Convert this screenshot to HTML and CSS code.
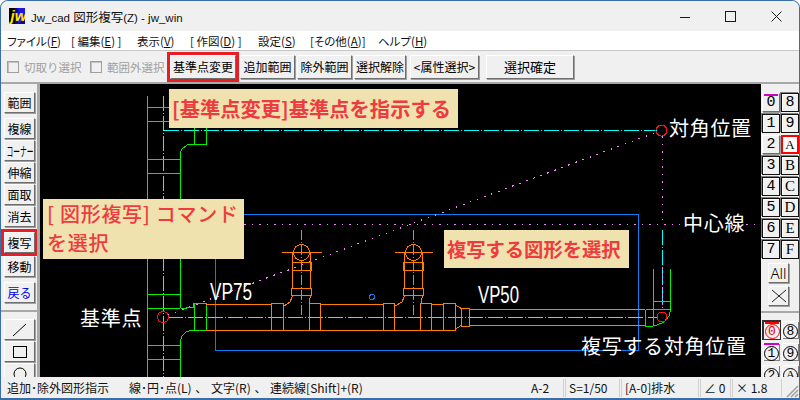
FILE: index.html
```html
<!DOCTYPE html>
<html lang="ja">
<head>
<meta charset="utf-8">
<title>Jw_cad 図形複写</title>
<link rel="stylesheet" href="styles.css">
</head>
<body>
<div class="window">
  <header class="titlebar">
    <svg class="appicon" width="16" height="16" viewBox="0 0 16 16" shape-rendering="crispEdges"><rect width="16" height="16" fill="#0c0c80"/><path d="M0 0H6V16H0Z" fill="#000"/><path d="M9 0H16V9L9 16Z" fill="#1818e0"/><text x="1.5" y="12.5" class="appicon-text">jw</text></svg>
    <span class="title">Jw_cad <span class="title-cjk">図形複写</span>(Z) - jw_win</span>
    <div class="controls">
      <svg width="120" height="31" viewBox="0 0 120 31"><g fill="none" stroke="#1a1a1a" stroke-width="1" shape-rendering="crispEdges"><path d="M0 16.5H10"/><rect x="45.5" y="10.5" width="10" height="10" rx="1"/></g><path d="M91.5 10.5L101.5 20.5M101.5 10.5L91.5 20.5" stroke="#1a1a1a" fill="none"/></svg>
    </div>
  </header>
  <nav class="menubar">
    <span class="m m1">ファイル(<u>F</u>)</span>
    <span class="m m2">[ 編集(<u>E</u>) ]</span>
    <span class="m m3">表示(<u>V</u>)</span>
    <span class="m m4">[ 作図(<u>D</u>) ]</span>
    <span class="m m5">設定(<u>S</u>)</span>
    <span class="m m6">[その他(<u>A</u>)]</span>
    <span class="m">ヘルプ(<u>H</u>)</span>
  </nav>
  <div class="toolbar">
    <span class="check"></span><span class="checklabel lab1">切取り選択</span>
    <span class="check"></span><span class="checklabel lab2">範囲外選択</span>
    <button class="btn t-base framed">基準点変更</button>
    <button class="btn t-a">追加範囲</button>
    <button class="btn t-a">除外範囲</button>
    <button class="btn t-a t-c">選択解除</button>
    <button class="btn t-d">&lt;属性選択&gt;</button>
    <button class="btn t-e">選択確定</button>
  </div>
  <div class="main">
    <aside class="leftbar">
      <button class="btn side">範囲</button>
      <button class="btn side sp5">複線</button>
      <button class="btn side sp1"><span class="squeeze">コーナー</span></button>
      <button class="btn side sp1">伸縮</button>
      <button class="btn side sp1">面取</button>
      <button class="btn side sp1">消去</button>
      <button class="btn side sp5 framed">複写</button>
      <button class="btn side sp3">移動</button>
      <button class="btn side sp5 back">戻る</button>
      <div class="divider"></div>
      <button class="btn side"><svg width="20" height="16" viewBox="0 0 20 16"><path d="M3 14L16 2" stroke="#000" fill="none"/></svg></button>
      <button class="btn side sp1"><svg width="16" height="14" viewBox="0 0 16 14" shape-rendering="crispEdges"><rect x="1.5" y="1.5" width="13" height="11" fill="none" stroke="#000"/></svg></button>
      <button class="btn side sp1 cut"><svg width="16" height="16" viewBox="0 0 16 16"><circle cx="8" cy="8" r="6" fill="none" stroke="#000"/></svg></button>
    </aside>
    <section class="canvas">
      <svg class="drawing" width="721" height="294" viewBox="40 84 721 294">
        <g fill="none" shape-rendering="crispEdges">
          <path stroke="#0a80f0" d="M215.5 214.5H638.5V350.5H215.5Z"/>
          <g stroke="#ff7fff" stroke-dasharray="1.5 6" stroke-width="1.2">
            <path d="M168 315L657 132"/>
            <path d="M244 224.5H680M746 224.5H756"/>
            <path d="M662.5 136V224"/>
          </g>
          <g stroke="#00ffff">
            <path stroke-dasharray="15 2 1 2" d="M163.5 96V378"/>
            <path stroke-dasharray="15 2 1 2" d="M163.5 130.5H657"/>
            <path stroke-dasharray="15 2 1 2" d="M168 317.5H658"/>
            <path stroke-dasharray="15 2 1 2" d="M662.5 230V310"/>
          </g>
          <path stroke="#ff7fff" stroke-dasharray="2 3" d="M662.5 268V305"/>
          <g stroke="#00f000">
            <path d="M147.5 96V378M180.5 152V308M180.5 340V378"/>
            <path d="M147 107.5H169M147 121.5H169"/>
            <path d="M147 159.5H180M147 173.5H180M147 294.5H180M147 308.5H180M147 345.5H180M147 359.5H180"/>
            <path d="M194.5 128V144.5H206.5V128"/>
            <path d="M180.5 152L182 149L185 146.5L188 144.5H194"/>
            <path d="M180.5 308.5H186L188 307H193V303.5H206.5V330.5H194.5V303.5"/>
            <path d="M180.5 340L182 336L186 332L190 330.5H194"/>
            <path d="M653.5 269V326M670.5 269V310"/>
            <path d="M653 301.5H670M645.5 309.5H670M645.5 309.5V326.5H653"/>
            <path d="M670.5 310L669 316L664 322L657 325L653 326"/>
          </g>
          <g stroke="#ff8000">
            <path d="M206 304.5H271M320 304.5H383M431 304.5H443M206 330.5H455"/>
            <path d="M271.5 303.5H283.5V330.5H271.5ZM309.5 303.5H320.5V330.5H309.5ZM383.5 303.5H394.5V330.5H383.5ZM420.5 303.5H431.5V330.5H420.5ZM443.5 303.5H455.5V330.5H443.5Z"/>
            <path d="M455 305L459 307L461 308.5M455 329L459 327L461 325.5"/>
            <path d="M461.5 308.5H469.5V326.5H461.5Z"/>
            <path d="M469 309.5H645M469 325.5H645"/>
            <path d="M292.5 252V288M310.5 252V288M404.5 252V288M422.5 252V288"/>
            <path d="M292 262.5H311V270.5H292ZM291.5 288.5H311.5V295.5H291.5ZM403.5 262.5H423.5V270.5H403.5ZM403.5 288.5H423.5V295.5H403.5Z"/>
            <circle cx="301.5" cy="252.5" r="8"/><circle cx="413.5" cy="252.5" r="8"/>
            <path d="M282 252.5H322M395 252.5H433"/>
            <path stroke-dasharray="10 2 1 2" d="M301.5 230V318M413.5 230V318"/>
            <path d="M292.5 296L290 302L284 306M310.5 296L309 303.5M404.5 296L402 302L395 306M422.5 296L421 303.5"/>
          </g>
          <circle cx="372" cy="297" r="2.5" stroke="#0a80f0"/>
          <g stroke="#ff1414">
            <circle cx="163" cy="317" r="5.5"/>
            <circle cx="661.5" cy="130.5" r="5.5"/>
            <circle cx="662" cy="317" r="5"/>
          </g>
        </g>
        <text class="lbl" x="669" y="136">対角位置</text>
        <text class="lbl" x="683" y="231">中心線</text>
        <text class="lbl" x="80" y="326">基準点</text>
        <text class="lbl" x="581" y="354">複写する対角位置</text>
        <text class="vp" x="210" y="300" textLength="42" lengthAdjust="spacingAndGlyphs">VP75</text>
        <text class="vp" x="478" y="303" textLength="41" lengthAdjust="spacingAndGlyphs">VP50</text>
      </svg>
      <div class="note note1">[基準点変更]基準点を指示する</div>
      <div class="note note2"><span class="brk">[</span>図形複写<span class="brk">]</span>コマンド<br>を選択</div>
      <div class="note note3">複写する図形を選択</div>
    </section>
    <aside class="rightbar">
      <div class="laygrid">
        <button class="lay up bar">0</button><button class="lay">8</button>
        <button class="lay">1</button><button class="lay">9</button>
        <button class="lay up">2</button><button class="lay cur">A</button>
        <button class="lay">3</button><button class="lay ltr">B</button>
        <button class="lay">4</button><button class="lay ltr">C</button>
        <button class="lay">5</button><button class="lay ltr">D</button>
        <button class="lay">6</button><button class="lay ltr">E</button>
        <button class="lay">7</button><button class="lay ltr">F</button>
      </div>
      <button class="btn wide all">All</button>
      <button class="btn wide cross"><svg width="16" height="14" viewBox="0 0 16 14"><path d="M1 1L15 13M15 1L1 13" stroke="#222" fill="none"/></svg></button>
      <div class="divider"></div>
      <div class="laygrid group">
        <button class="lay big sel"><span class="ring">0</span></button><button class="lay big plain"><span class="ring">8</span></button>
        <button class="lay big plain bar"><span class="ring">1</span></button><button class="lay big plain"><span class="ring">9</span></button>
        <button class="lay big plain"><span class="ring">2</span></button><button class="lay big plain"><span class="ring ltr">A</span></button>
      </div>
    </aside>
  </div>
  <footer class="statusbar">
    <span class="s-msg1">追加･除外図形指示</span>
    <span class="s-msg2">線･円･点(L) 、 文字(R) 、 連続線[Shift]+(R)</span>
    <span class="cell c1">A-2</span>
    <span class="cell c2">S=1/50</span>
    <span class="cell c3">[A-0]排水</span>
    <span class="cell c4">∠ 0</span>
    <span class="cell c5">× 1.8</span>
    <svg class="grip" width="15" height="15" viewBox="0 0 15 15"><path d="M14 3L3 14M14 7L7 14M14 11L11 14" stroke="#a0a0a0" stroke-width="1.5" fill="none"/></svg>
  </footer>
</div>
</body>
</html>
```
FILE: styles.css
```css
* { box-sizing: border-box; }
html, body { margin: 0; padding: 0; background: #fff; }
body { font-family: "Noto Sans CJK JP", "Noto Sans", sans-serif; font-size: 12px; color: #111; }
.window {
  width: 800px; height: 400px; display: flex; flex-direction: column;
  border: 1px solid #3a6ea8; border-width: 1px 1px 2px 1px; border-radius: 8px 8px 0 0; overflow: hidden; background: #f0f0f0;
}
.titlebar { height: 30px; flex: none; display: flex; align-items: center; padding-left: 8px; background: #f0f0f0; }
.appicon { flex: none; }
.appicon-text { font: italic bold 15px "Liberation Sans", sans-serif; fill: #ffe800; }
.title { margin-left: 6px; font-family: "Liberation Sans", sans-serif; font-size: 11.5px; white-space: nowrap; }
.title-cjk { font-family: "Noto Sans CJK JP", sans-serif; font-size: 12.5px; }
.controls { margin-left: auto; width: 119px; height: 30px; margin-top: -1px; }
.menubar { height: 20px; flex: none; background: #fff; display: flex; align-items: center; padding-left: 6px; font-size: 11.5px; border-bottom: 1px solid #c8c8c8; font-feature-settings: "palt"; }
.m { white-space: nowrap; display: block; }
.m1 { width: 64px; } .m2 { width: 66px; } .m3 { width: 53px; } .m4 { width: 68px; } .m5 { width: 52px; } .m6 { width: 68px; }
.toolbar { height: 33px; flex: none; display: flex; align-items: center; padding: 0 0 0 6px; background: #f0f0f0; border-bottom: 2px solid #a8a8a8; }
.check { width: 12px; height: 12px; flex: none; background: #f0f0f0; border: 1px solid #a0a0a0; box-shadow: inset 1px 1px 0 #c0c0c0; }
.checklabel { color: #a0a0a0; font-size: 11.5px; margin-left: 5px; white-space: nowrap; }
.lab1 { width: 66px; }
.lab2 { width: 59px; overflow: hidden; }
.btn {
  font: inherit; font-size: 12px; color: #000; background: #f0f0f0; padding: 0; margin: 0;
  display: flex; align-items: center; justify-content: center; white-space: nowrap;
  border: 1px solid; border-color: #fff #6e6e6e #6e6e6e #fff; box-shadow: 1px 1px 0 #a0a0a0;
}
.toolbar .btn { height: 24px; }
.t-base { width: 66px; margin-left: 4px; margin-right: 4px; }
.t-a { width: 55px; margin-right: 2px; }
.t-c { width: 52px; margin-right: 4px; }
.t-d { width: 69px; margin-right: 7px; }
.toolbar .t-e { width: 88px; font-size: 13px; }
.framed { outline: 3px solid #ea1c24; outline-offset: 0; }
.main { flex: 1; min-height: 0; display: flex; }
.leftbar { width: 39px; flex: none; padding: 8px 0 0 3px; background: #f0f0f0; border-right: 3px solid #a8a8a8; overflow: hidden; display: flex; flex-direction: column; }
.side { width: 31px; height: 21px; flex: none; font-size: 12px; }
.squeeze { display: inline-block; font-size: 13px; transform: scaleX(0.52); }
.sp1 { margin-top: 1px; } .sp3 { margin-top: 3px; } .sp5 { margin-top: 5px; }
.back { color: #0000f0; }
.divider { height: 2px; flex: none; background: #a8a8a8; margin: 7px 0 7px -3px; width: 40px; }
.cut { margin-bottom: -10px; }
.canvas { position: relative; width: 721px; flex: none; background: #000; overflow: hidden; }
.drawing { display: block; }
.lbl { font-family: "Noto Sans CJK JP", sans-serif; font-size: 20px; letter-spacing: 0.7px; fill: #fff; }
.vp { font-family: "Liberation Sans", sans-serif; font-size: 24px; fill: #fff; }
.note { position: absolute; background: #f0e2ae; color: #ee3b3f; font-weight: 700; font-size: 19.3px; white-space: nowrap; }
.note1 { left: 129px; top: 5px; width: 289px; height: 39px; line-height: 38px; padding-left: 3px; font-size: 20.3px; }
.note2 { left: 3px; top: 115px; width: 201px; height: 60px; font-size: 20px; line-height: 29px; padding-left: 4px; letter-spacing: 0.7px; font-weight: 500; }
.brk { display: inline-block; margin: 0 3px 0 0; width: 10px; }
.note3 { left: 404px; top: 146px; width: 185px; height: 38px; line-height: 38px; padding-left: 3px; }
.rightbar { flex: 1; min-width: 0; background: #f0f0f0; display: flex; flex-direction: column; overflow: hidden; padding: 9px 0 0 1px; }
.laygrid { display: grid; grid-template-columns: 18px 18px; grid-auto-rows: 19px; gap: 2px 1px; flex: none; }
.lay {
  font: 15px "Liberation Mono", monospace; color: #000; background: #f0f0f0; padding: 0; margin: 0; position: relative;
  border: 1px solid #111; box-shadow: -1px -1px 0 #808080, inset 1px 1px 0 #fff; display: flex; align-items: center; justify-content: center;
}
.lay.ltr, .ring.ltr { font-family: "Liberation Serif", serif; }
.lay.up { border-color: #fff #6e6e6e #6e6e6e #fff; box-shadow: 1px 1px 0 #a0a0a0; }
.lay.bar::before { content: ""; position: absolute; left: 1px; right: 1px; top: 0; height: 2px; background: #d000d0; }
.lay.cur { border: 2px solid #ff0000; box-shadow: none; background: #fff; font-family: "Liberation Serif", serif; font-size: 13px; }
.wide { width: 21px; height: 20px; margin-left: 6px; flex: none; }
.all { margin-top: 4px; font-size: 15px; font-family: "Noto Sans", sans-serif; font-weight: 300; }
.cross { margin-top: 3px; }
.rightbar .divider { margin: 5px 0 7px -1px; width: 40px; }
.group { grid-auto-rows: 20px; grid-template-columns: 19px 19px; gap: 2px 0; }
.big { font-size: 13px; overflow: hidden; }
.big.plain { border-color: transparent; box-shadow: inset 1px 1px 0 #fff, inset -1px -1px 0 #808080; }
.big.sel { border: 1px solid #303030; border-width: 2px 1px 1px 2px; box-shadow: none; }
.big.sel::before { content: ""; position: absolute; left: 1px; right: 1px; top: 0; height: 2px; background: #ff0000; }
.ring { display: flex; align-items: center; justify-content: center; flex: none; width: 15px; height: 15px; border: 1px solid #000; border-radius: 50%; margin-top: 2px; }
.sel .ring { color: #e00000; border-color: #ff0000; }
.statusbar { height: 21px; flex: none; position: relative; display: flex; align-items: center; font-size: 12px; background: #f0f0f0; white-space: nowrap; }
.s-msg1 { width: 122px; margin-left: 6px; }
.s-msg2 { width: 402px; word-spacing: 1px; }
.cell { display: flex; align-items: center; height: 18px; padding-left: 3px; border-right: 1px solid #d0d0d0; border-left: 1px solid #d0d0d0; margin-right: 1px; font-family: "Noto Sans CJK JP", sans-serif; }
.c1 { width: 33px; padding-left: 0; border-left: 0; } .c2 { width: 55px; } .c3 { width: 78px; } .c4 { width: 31px; } .c5 { width: 50px; }
.grip { position: absolute; right: 0; bottom: 0; }
```
